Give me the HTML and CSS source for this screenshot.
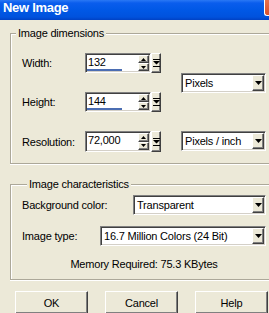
FILE: index.html
```html
<!DOCTYPE html>
<html lang="en">
<head>
    <meta charset="UTF-8">
    <title>New Image</title>
    <link rel="stylesheet" href="styles.css">
</head>
<body>
    <div class="dialog">
        <div class="titlebar">
            <span class="title">New Image</span>
            <span class="close"></span>
        </div>

        <fieldset class="group">
            <legend>Image dimensions</legend>
            <div class="dims-grid">
                <span class="lbl row1">Width:</span>
                <div class="spin row1">
                    <div class="field">
                        <div class="value">132<span class="bar"></span></div>
                        <div class="arrows">
                            <span class="arrow"><svg width="5" height="3"><path d="M2.5 0L5 3H0z"/></svg></span>
                            <span class="arrow"><svg width="5" height="3"><path d="M0 0h5L2.5 3z"/></svg></span>
                        </div>
                    </div>
                    <span class="extra"><svg width="7" height="8"><path d="M0 0h7v1H0zM0 2h7L3.5 5.5zM0 7h7v1H0z"/></svg></span>
                </div>
                <div class="combo unit-combo">
                    <span class="combo-text">Pixels</span>
                    <span class="combo-btn"><svg width="7" height="4"><path d="M0 0h7L3.5 4z"/></svg></span>
                </div>

                <span class="lbl row2">Height:</span>
                <div class="spin row2">
                    <div class="field">
                        <div class="value">144<span class="bar"></span></div>
                        <div class="arrows">
                            <span class="arrow"><svg width="5" height="3"><path d="M2.5 0L5 3H0z"/></svg></span>
                            <span class="arrow"><svg width="5" height="3"><path d="M0 0h5L2.5 3z"/></svg></span>
                        </div>
                    </div>
                    <span class="extra"><svg width="7" height="8"><path d="M0 0h7v1H0zM0 2h7L3.5 5.5zM0 7h7v1H0z"/></svg></span>
                </div>

                <span class="lbl row3">Resolution:</span>
                <div class="spin row3">
                    <div class="field">
                        <div class="value">72,000</div>
                        <div class="arrows">
                            <span class="arrow"><svg width="5" height="3"><path d="M2.5 0L5 3H0z"/></svg></span>
                            <span class="arrow"><svg width="5" height="3"><path d="M0 0h5L2.5 3z"/></svg></span>
                        </div>
                    </div>
                    <span class="extra"><svg width="7" height="8"><path d="M0 0h7v1H0zM0 2h7L3.5 5.5zM0 7h7v1H0z"/></svg></span>
                </div>
                <div class="combo row3">
                    <span class="combo-text">Pixels / inch</span>
                    <span class="combo-btn"><svg width="7" height="4"><path d="M0 0h7L3.5 4z"/></svg></span>
                </div>
            </div>
        </fieldset>

        <fieldset class="group group-chars">
            <legend>Image characteristics</legend>
            <div class="row">
                <span class="lbl">Background color:</span>
                <div class="combo bg-combo">
                    <span class="combo-text">Transparent</span>
                    <span class="combo-btn"><svg width="7" height="4"><path d="M0 0h7L3.5 4z"/></svg></span>
                </div>
            </div>
            <div class="row">
                <span class="lbl">Image type:</span>
                <div class="combo type-combo">
                    <span class="combo-text">16.7 Million Colors (24 Bit)</span>
                    <span class="combo-btn"><svg width="7" height="4"><path d="M0 0h7L3.5 4z"/></svg></span>
                </div>
            </div>
            <div class="memory">Memory Required: 75.3 KBytes</div>
        </fieldset>

        <div class="buttons">
            <button>OK</button>
            <button>Cancel</button>
            <button>Help</button>
        </div>
    </div>
</body>
</html>
```

FILE: styles.css
```css
body {
    margin: 0;
    background-color: #ece9d8;
    font-family: 'Liberation Sans', Arial, sans-serif;
    font-size: 11px;
    letter-spacing: -0.2px;
    color: #000;
    overflow: hidden;
}

/* the window is cut off on the right, so groups run to the edge */
.dialog {
    width: 269px;
}

.titlebar {
    height: 20px;
    display: flex;
    align-items: flex-start;
    padding: 0 0 0 3px;
    box-sizing: border-box;
    background: linear-gradient(to bottom, #2a78f5 0, #0a5ded 3px, #0058e6 50%, #0052dd 85%, #0041c4 100%);
}

.title {
    color: #fff;
    font-weight: bold;
    font-size: 13px;
    line-height: 16px;
    letter-spacing: -0.3px;
}

.close {
    margin-left: auto;
    width: 4px;
    height: 15px;
    border: 1px solid #fff;
    border-top: none;
    border-right: none;
    border-radius: 0 0 0 3px;
    background: linear-gradient(to bottom, #e8714c, #d9502c);
}

/* group boxes */
.group {
    margin: 6px 0 0 10px;
    padding: 13px 0 11px 0;
    border: 1px solid #aca899;
    border-right: none;
    box-shadow: 0 1px 0 #fff, inset 1px 1px 0 #fff;
    min-width: 0;
}

.group legend {
    margin-left: 5px;
    padding: 0 2px;
    line-height: 14px;
    background-color: #ece9d8;
}

.group-chars {
    margin-top: 13px;
    padding: 4px 3px 8px 11px;
}

.dims-grid {
    display: grid;
    grid-template-columns: 43px 76px 85px;
    grid-template-rows: 20px 20px 21px;
    column-gap: 20px;
    row-gap: 19px;
    padding-left: 11px;
}

.lbl {
    align-self: center;
}

.row1 { grid-row: 1; }
.row2 { grid-row: 2; }
.row3 { grid-row: 3; }

.unit-combo {
    grid-column: 3;
    grid-row: 1 / 3;
    align-self: center;
}

/* spin edit */
.spin {
    display: flex;
    align-items: stretch;
}

.field {
    width: 66px;
    display: flex;
    box-sizing: border-box;
    background-color: #fff;
    border: 1px solid;
    border-color: #808080 #fff #fff #808080;
    box-shadow: inset 1px 1px 0 #404040, inset -1px -1px 0 #d4d0c8;
    padding: 1px;
}

.value {
    flex: 1;
    display: flex;
    flex-direction: column;
    padding-left: 1px;
    line-height: 14px;
}

.bar {
    margin-top: auto;
    margin-left: -1px;
    width: 35px;
    height: 2px;
    background-color: #4b6db2;
}

.arrows {
    width: 11px;
    display: flex;
    flex-direction: column;
}

.arrow,
.extra,
.combo-btn {
    display: flex;
    align-items: center;
    justify-content: center;
    box-sizing: border-box;
    background-color: #ece9d8;
    border: 1px solid;
    border-color: #fff #404040 #404040 #fff;
    box-shadow: inset -1px -1px 0 #808080;
}

.arrow {
    flex: 1;
}

.extra {
    width: 10px;
}

svg {
    display: block;
    fill: #000;
}

/* drop down list */
.combo {
    height: 20px;
    display: flex;
    box-sizing: border-box;
    background-color: #fff;
    border: 1px solid;
    border-color: #808080 #fff #fff #808080;
    box-shadow: inset 1px 1px 0 #404040, inset -1px -1px 0 #d4d0c8;
    padding: 1px;
}

.combo-text {
    flex: 1;
    padding-left: 2px;
    line-height: 16px;
    white-space: nowrap;
    overflow: hidden;
}

.combo-btn {
    width: 12px;
}

.row {
    display: flex;
    align-items: center;
    justify-content: space-between;
    margin-bottom: 11px;
}

.bg-combo {
    width: 133px;
}

.type-combo {
    width: 166px;
}

.memory {
    margin-top: 1px;
    text-align: center;
    line-height: 14px;
}

.buttons {
    display: flex;
    gap: 17px;
    margin-top: 11px;
    padding-left: 15px;
}

button {
    width: 73px;
    height: 23px;
    padding: 0;
    font-family: inherit;
    font-size: 11px;
    letter-spacing: inherit;
    color: #000;
    background-color: #ece9d8;
    border: 1px solid;
    border-color: #fff #404040 #404040 #fff;
    box-shadow: inset -1px -1px 0 #808080;
}
```
